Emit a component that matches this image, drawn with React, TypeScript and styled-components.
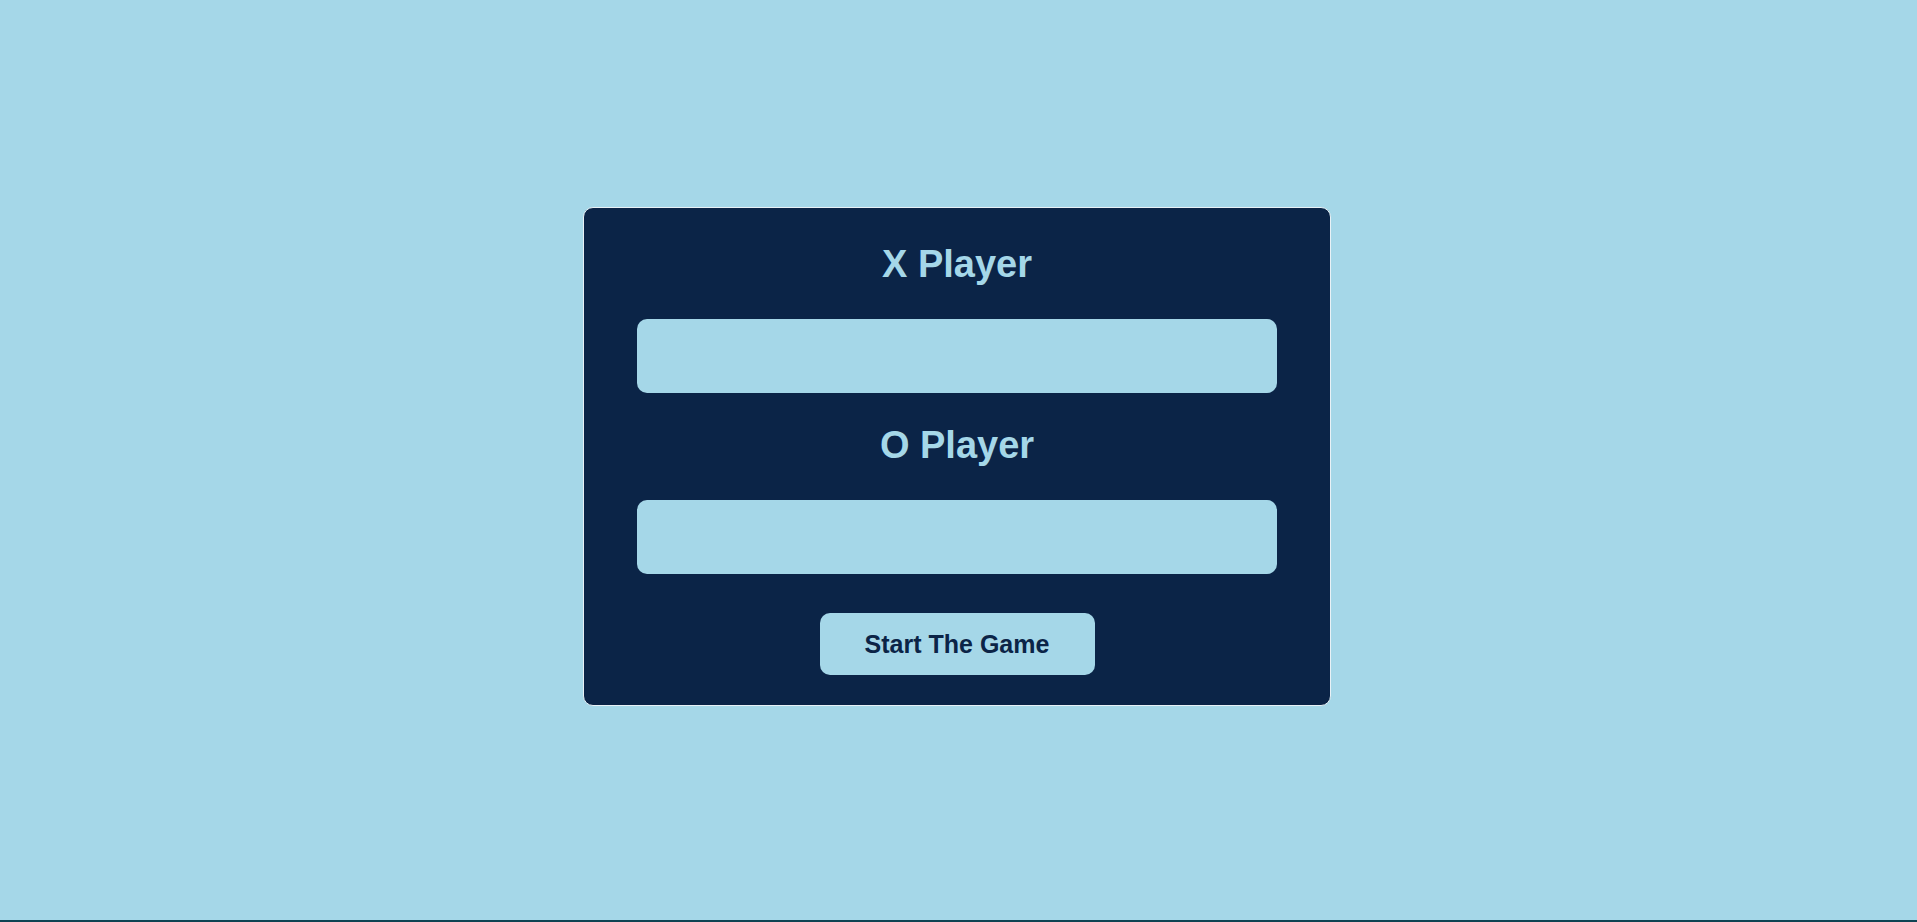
import React, { useState } from 'react';
import styled, { createGlobalStyle } from 'styled-components';

const GlobalStyle = createGlobalStyle`
  html {
    background-color: #0e4353;
  }
  body {
    margin: 0;
    font-family: 'Liberation Sans', Arial, sans-serif;
  }
`;

const Page = styled.div`
  min-height: 920px;
  background-color: #a5d7e8;
  display: flex;
  justify-content: center;
  align-items: center;
  padding: 0 3px 7px 0;
  box-sizing: border-box;
`;

const Card = styled.form`
  width: 748px;
  box-sizing: border-box;
  background-color: #0b2447;
  border: 1px solid #e8f1f6;
  border-radius: 10px;
  padding: 36px 53px 30px;
  display: flex;
  flex-direction: column;
  align-items: center;
`;

const Title = styled.h2`
  margin: 0 0 35px;
  font-size: 38px;
  line-height: 40px;
  font-weight: 700;
  color: #a5d7e8;
`;

const NameInput = styled.input<{ $spacing: number }>`
  width: 640px;
  height: 74px;
  box-sizing: border-box;
  margin: 0 0 ${(p) => p.$spacing}px;
  padding: 0 20px;
  border: none;
  border-radius: 10px;
  background-color: #a5d7e8;
  color: #0b2447;
  font-family: inherit;
  font-size: 22px;
  outline: none;
`;

const StartButton = styled.button`
  width: 275px;
  height: 62px;
  border: none;
  border-radius: 10px;
  background-color: #a5d7e8;
  color: #0b2447;
  font-family: inherit;
  font-size: 25px;
  font-weight: 700;
  cursor: pointer;
`;

export default function App() {
  const [xName, setXName] = useState('');
  const [oName, setOName] = useState('');

  return (
    <>
      <GlobalStyle />
      <Page>
        <Card onSubmit={(e) => e.preventDefault()}>
          <Title>X Player</Title>
          <NameInput $spacing={32} value={xName} onChange={(e) => setXName(e.target.value)} />
          <Title>O Player</Title>
          <NameInput $spacing={39} value={oName} onChange={(e) => setOName(e.target.value)} />
          <StartButton type="submit">Start The Game</StartButton>
        </Card>
      </Page>
    </>
  );
}
